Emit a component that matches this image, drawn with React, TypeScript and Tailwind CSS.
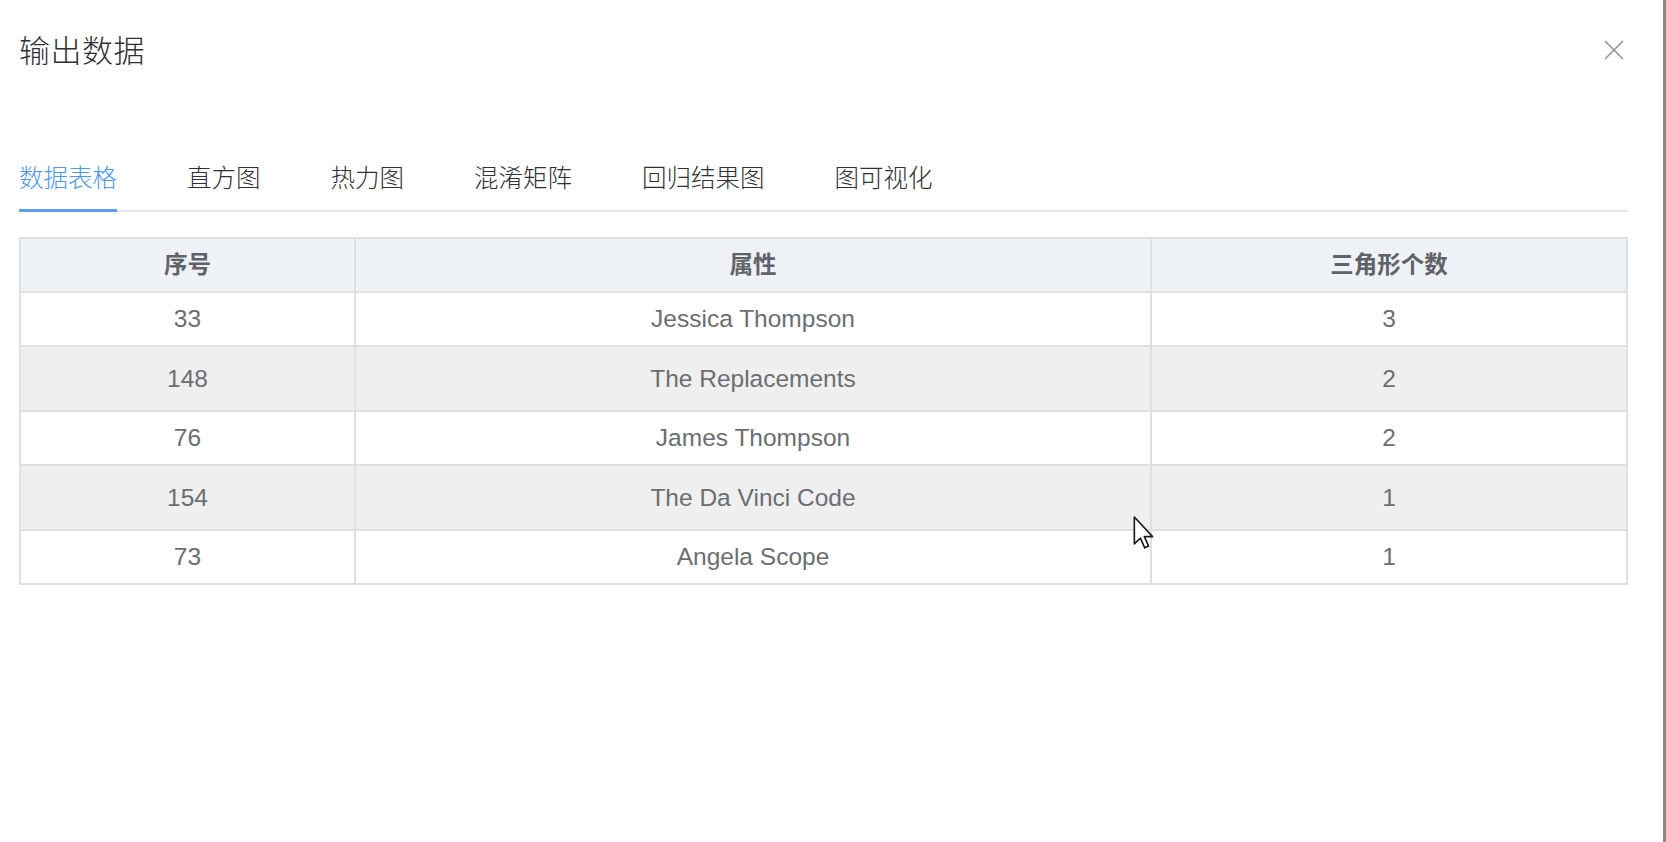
import React from "react";

const tabs = ["数据表格", "直方图", "热力图", "混淆矩阵", "回归结果图", "图可视化"];

const rows = [
  { id: "33", name: "Jessica Thompson", count: "3", gray: false },
  { id: "148", name: "The Replacements", count: "2", gray: true },
  { id: "76", name: "James Thompson", count: "2", gray: false },
  { id: "154", name: "The Da Vinci Code", count: "1", gray: true },
  { id: "73", name: "Angela Scope", count: "1", gray: false },
];

export default function App() {
  return (
    <div
      className="w-[1666px] h-[842px] bg-white flex overflow-hidden"
      style={{ fontFamily: '"Liberation Sans", "Noto Sans CJK SC", sans-serif' }}
    >
      <div className="flex-1 flex flex-col pl-[19px] pr-[35px] relative">
        {/* Header */}
        <div className="flex items-center justify-between h-[102px]">
          <div
            className="text-[31px] text-[#303133] leading-[42px] tracking-[0.5px] mt-[-4px]"
            style={{ fontFamily: '"Noto Sans CJK SC", sans-serif', fontWeight: 300 }}
          >
            输出数据
          </div>
          <svg width="20" height="20" viewBox="0 0 20 20" className="mr-[4px] mt-[-2px]">
            <path d="M1 1 L19 19 M19 1 L1 19" stroke="#909399" strokeWidth="1.6" fill="none" />
          </svg>
        </div>

        {/* Tabs */}
        <div className="mt-[38px] flex h-[72px] border-b-2 border-[#e4e7ed]">
          {tabs.map((t, i) => (
            <div
              key={t}
              className={
                "relative flex items-center h-[70px] pt-[4px] text-[24.5px] " +
                (i === 0 ? "pl-0 pr-[35px] text-[#4e97f3]" : "px-[35px] text-[#303133]")
              }
              style={{ fontFamily: '"Noto Sans CJK SC", sans-serif', fontWeight: 300 }}
            >
              {t}
              {i === 0 && (
                <div className="absolute left-0 right-[35px] bottom-[-2px] h-[3px] bg-[#5b9ef3]" />
              )}
            </div>
          ))}
        </div>

        {/* Table */}
        <table className="mt-[25px] w-[1607px] border-collapse table-fixed">
          <colgroup>
            <col className="w-[335px]" />
            <col className="w-[796px]" />
            <col className="w-[476px]" />
          </colgroup>
          <thead>
            <tr className="h-[54px] bg-[#eef1f6]">
              {["序号", "属性", "三角形个数"].map((h) => (
                <th
                  key={h}
                  className="border-2 border-[#e0e0e0] text-center text-[23.5px] font-bold text-[#5f6266] p-0 pb-[2px]"
                  style={{ fontFamily: '"Noto Sans CJK SC", sans-serif' }}
                >
                  {h}
                </th>
              ))}
            </tr>
          </thead>
          <tbody>
            {rows.map((r) => (
              <tr key={r.id} className={r.gray ? "h-[65px] bg-[#efefef]" : "h-[54px] bg-white"}>
                <td className="border-2 border-[#e0e0e0] text-center text-[24.5px] text-[#6b6d71] p-0 pt-[1px]">{r.id}</td>
                <td className="border-2 border-[#e0e0e0] text-center text-[24.5px] text-[#6b6d71] p-0 pt-[1px]">{r.name}</td>
                <td className="border-2 border-[#e0e0e0] text-center text-[24.5px] text-[#6b6d71] p-0 pt-[1px]">{r.count}</td>
              </tr>
            ))}
          </tbody>
        </table>

        {/* Mouse cursor */}
        <svg
          width="22"
          height="34"
          viewBox="0 0 12 19"
          className="absolute left-[1133px] top-[516px]"
        >
          <path
            d="M0.6 0.6 L0.6 15.6 L4 12.4 L6.4 17.8 L8.6 16.8 L6.2 11.5 L10.8 11.5 Z"
            fill="#ffffff"
            stroke="#1a1a1a"
            strokeWidth="0.9"
            strokeLinejoin="round"
          />
        </svg>
      </div>
      <div className="w-[3px] h-full bg-[#8a8a8a]" />
    </div>
  );
}
